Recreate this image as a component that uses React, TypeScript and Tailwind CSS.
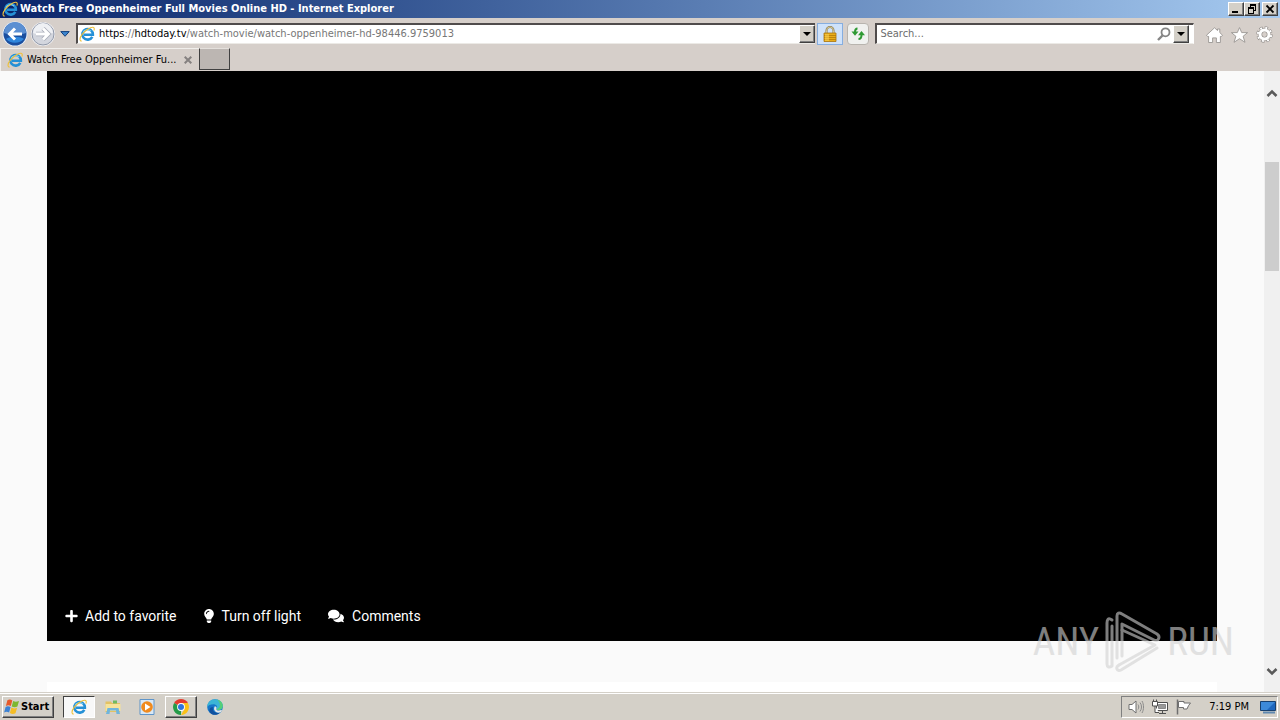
import type { ReactNode } from 'react';
import { FaComments, FaLightbulb, FaPlus } from 'react-icons/fa';

const PAGE_TITLE = 'Watch Free Oppenheimer Full Movies Online HD';

function IeLogo({ className }: { className: string }) {
  return (
    <svg viewBox="0 0 16 16" className={className} fill="none" aria-hidden="true">
      <path d="M13.300 10.800A5.300 5.300 0 1 1 13.900 8.700H5" stroke="#2590d6" strokeWidth="2.600" />
      <path d="M4 6.600A4.900 4.900 0 0 1 12 5.200" stroke="#7fd0f7" strokeWidth="1.200" />
      <path d="M2.800 15C.3 15.200.4 12 3.300 8.200 6.200 4.300 11.400 1 14 1.300c1.400.2 1.500 1.700.9 3.300" stroke="#efc03a" strokeWidth="1.100" />
    </svg>
  );
}

function WindowButton({ label, children, className = '' }: { label: string; children: ReactNode; className?: string }) {
  return (
    <button
      type="button"
      aria-label={label}
      className={`flex h-[14px] w-4 items-center justify-center border border-t-white border-r-[#404040] border-b-[#404040] border-l-white bg-[#d4d0c8] shadow-[inset_-1px_-1px_0_#808080] ${className}`}
    >
      <svg viewBox="0 0 14 12" className="h-3 w-[14px] shrink-0" fill="none" stroke="#000" shapeRendering="crispEdges" aria-hidden="true">
        {children}
      </svg>
    </button>
  );
}

function TitleBar() {
  return (
    <header className="flex h-[18px] shrink-0 items-center bg-linear-to-r from-[#0a246a] to-[#a6caf0] px-[2px]">
      <IeLogo className="mr-[2px] h-4 w-4" />
      <h1 className="flex-1 truncate text-[11px] leading-4 font-bold text-white">{PAGE_TITLE} - Internet Explorer</h1>
      <WindowButton label="Minimize">
        <path d="M3 9h6" strokeWidth="2" />
      </WindowButton>
      <WindowButton label="Restore">
        <path d="M5 2h6M3 5h6" strokeWidth="2" />
        <path d="M5.500 2v3M10.500 2v5.500H9M3.500 5v5.500h5V5" />
      </WindowButton>
      <WindowButton label="Close" className="ml-[2px]">
        <path d="M3.500 2.500l7 7M10.500 2.500l-7 7" strokeWidth="1.800" shapeRendering="auto" />
      </WindowButton>
    </header>
  );
}

function DropButton({ label }: { label: string }) {
  return (
    <button
      type="button"
      aria-label={label}
      className="flex h-[18px] w-4 shrink-0 items-center justify-center border border-t-white border-r-[#404040] border-b-[#404040] border-l-white bg-[#d4d0c8] shadow-[inset_-1px_-1px_0_#808080]"
    >
      <svg viewBox="0 0 8 4" className="h-1 w-2" aria-hidden="true">
        <path d="M0 0h8L4 4z" />
      </svg>
    </button>
  );
}

function NavBar() {
  return (
    <div className="flex h-[30px] shrink-0 items-center pt-px pl-[2px]">
      <button type="button" aria-label="Back">
        <svg viewBox="0 0 26 26" className="h-[26px] w-[26px]" aria-hidden="true">
          <circle cx="13" cy="13" r="12.500" fill="#e8eef7" />
          <circle cx="13" cy="13" r="11.500" fill="#1b4f9f" />
          <path d="M2 12a11 11 0 0 1 22 0c-6 2-16 2-22 0z" fill="#5b8fd2" />
          <path d="M4 18a11 9 0 0 0 18 0c-4-3-14-3-18 0z" fill="#2f86dc" />
          <path d="M20 13H8M13 7.500L7.500 13l5.500 5.500" fill="none" stroke="#fff" strokeWidth="3" />
        </svg>
      </button>
      <button type="button" aria-label="Forward" className="ml-[2px]">
        <svg viewBox="0 0 26 26" className="h-[26px] w-[26px]" aria-hidden="true">
          <circle cx="13" cy="13" r="12" fill="#f4f4f6" />
          <circle cx="13" cy="13" r="11" fill="#d3d6de" stroke="#8f97a8" />
          <path d="M3 12a10 10 0 0 1 20 0c-6 2-14 2-20 0z" fill="#eef0f4" />
          <path d="M6 13h12M13 7.500l5.500 5.500-5.500 5.500" fill="none" stroke="#a9adb8" strokeWidth="4.500" />
          <path d="M6 13h12M13 7.500l5.500 5.500-5.500 5.500" fill="none" stroke="#fff" strokeWidth="2.800" />
        </svg>
      </button>
      <button type="button" aria-label="Recent pages" className="ml-1">
        <svg viewBox="0 0 10 6" className="h-[6px] w-[10px]" aria-hidden="true">
          <path d="M.8.600h8.400L5 5.300z" fill="#3c86cf" stroke="#123f7c" />
        </svg>
      </button>
      <div className="ml-[6px] flex h-[21px] flex-[743] items-center border-t-2 border-b border-l-2 border-t-[#504c4c] border-b-[#eceae6] border-l-[#504c4c] bg-white">
        <IeLogo className="mx-px h-4 w-4" />
        <div className="relative ml-px min-w-0 flex-1">
          <input
            aria-label="Address"
            defaultValue="https://hdtoday.tv/watch-movie/watch-oppenheimer-hd-98446.9759013"
            className="block w-full bg-white pl-[2px] text-[11px] leading-4 text-transparent outline-none"
          />
          <span className="pointer-events-none absolute inset-0 truncate pl-[2px] text-[11px] leading-4 text-[#777]">
            <b className="font-normal text-black">https</b>://<b className="font-normal text-black">hdtoday.tv</b>
            /watch-movie/watch-oppenheimer-hd-98446.9759013
          </span>
        </div>
        <DropButton label="Show address history" />
      </div>
      <button
        type="button"
        aria-label="Security report"
        className="ml-[2px] flex h-[22px] w-[26px] shrink-0 items-center justify-center border border-[#86aee0] bg-[#cfe2fa]"
      >
        <svg viewBox="0 0 14 16" className="h-4 w-[14px]" aria-hidden="true">
          <path d="M3.500 8V4.500a3.500 3.500 0 0 1 7 0V8" fill="none" stroke="#8b7a4a" strokeWidth="2" />
          <path d="M3.500 8V4.500a3.500 3.500 0 0 1 7 0V8" fill="none" stroke="#e6d9a8" strokeWidth=".8" />
          <path d="M1 7h12v8.500H1z" fill="#e9ae1c" stroke="#a8730c" strokeWidth=".8" />
          <path d="M1 9.500h12M1 11.500h12M1 13.500h12" stroke="#b57a08" strokeWidth=".8" />
          <path d="M2 8h4v7H2z" fill="#ffd75a" opacity=".5" />
        </svg>
      </button>
      <button
        type="button"
        aria-label="Refresh"
        className="ml-1 flex h-[22px] w-[22px] shrink-0 items-center justify-center rounded-sm border border-[#b8b4ae] bg-[#f0f1ef]"
      >
        <svg viewBox="0 0 16 14" className="h-[14px] w-4" aria-hidden="true">
          <path d="M7.500 1.500C5.600 1.500 5 2.600 5 5M8.500 12c2.200 0 3-1.200 3-4" fill="none" stroke="#2e9a33" strokeWidth="2" />
          <path d="M1.500 4.500h7L5 8.800zM8 8.200h7L11.500 4z" fill="#2e9a33" />
        </svg>
      </button>
      <form
        role="search"
        className="ml-[6px] flex h-[21px] flex-[314] items-center border-t-2 border-r border-b border-l-2 border-t-[#504c4c] border-r-white border-b-[#eceae6] border-l-[#504c4c] bg-white pr-1"
      >
        <input
          aria-label="Search"
          placeholder="Search..."
          className="block min-w-0 flex-1 pl-[3px] text-[11px] leading-4 outline-none placeholder:text-[#6d6d6d]"
        />
        <button type="button" aria-label="Run search" className="mr-[2px]">
          <svg viewBox="0 0 14 14" className="h-[14px] w-[14px]" fill="none" stroke="#858585" aria-hidden="true">
            <circle cx="8.500" cy="5.300" r="4" strokeWidth="1.800" />
            <path d="M5.500 8.500L1 13" strokeWidth="2.400" />
          </svg>
        </button>
        <DropButton label="Search options" />
      </form>
      <div className="ml-3 flex shrink-0 items-center gap-2 pr-[7px] pt-[2px]">
        <button type="button" aria-label="Home">
          <svg viewBox="0 0 17 16" className="h-4 w-[17px]" fill="#fff" stroke="#9a9693" strokeWidth=".9" aria-hidden="true">
            <path d="M8.500.8l3 2.700V2h2.300v3.600L16.500 8.200 15 9.900l-.6-.5v6.100h-4v-4.600H6.600v4.600h-4V9.400l-.6.5L.5 8.200z" />
          </svg>
        </button>
        <button type="button" aria-label="Favorites">
          <svg viewBox="0 0 17 16" className="h-4 w-[17px]" fill="#fff" stroke="#9a9693" strokeWidth=".9" aria-hidden="true">
            <path d="M8.500.6l2.200 5h5.900l-4.500 3.700 1.900 6-5.500-3.600-5.500 3.600 1.900-6L.4 5.600h5.900z" />
          </svg>
        </button>
        <button type="button" aria-label="Tools">
          <svg viewBox="0 0 17 17" className="h-[17px] w-[17px]" fill="none" aria-hidden="true">
            <circle cx="8.500" cy="8.500" r="6.700" stroke="#8f8b88" strokeWidth="3" strokeDasharray="3.200 2.062" />
            <circle cx="8.500" cy="8.500" r="4.400" stroke="#8f8b88" strokeWidth="4" />
            <circle cx="8.500" cy="8.500" r="6.700" stroke="#fff" strokeWidth="2" strokeDasharray="2 3.262" strokeDashoffset="-.6" />
            <circle cx="8.500" cy="8.500" r="4.500" stroke="#fff" strokeWidth="3" />
          </svg>
        </button>
      </div>
    </div>
  );
}

function TabBar() {
  return (
    <div className="flex h-[23px] shrink-0">
      <div className="flex w-[199px] items-center border-t border-l border-[#f1efec] pl-[6px]">
        <IeLogo className="h-4 w-4" />
        <span className="ml-1 text-[11px] leading-4 whitespace-nowrap">Watch Free Oppenheimer Fu...</span>
        <button type="button" aria-label="Close tab" className="ml-auto mr-[7px]">
          <svg viewBox="0 0 8 8" className="h-2 w-2" stroke="#858180" strokeWidth="2" aria-hidden="true">
            <path d="M.7.700l6.600 6.600M7.300.700L.7 7.300" />
          </svg>
        </button>
      </div>
      <button
        type="button"
        aria-label="New tab"
        className="h-[22px] w-[31px] border border-t-[#e4e0dc] border-r-[#404040] border-b-[#404040] border-l-[#404040] bg-[#bcb6b2]"
      />
    </div>
  );
}

function PlayerActions() {
  return (
    <div className="flex items-center pb-[15px] pl-[18px] font-[Roboto,sans-serif] text-[14px] leading-5 text-white">
      <button type="button" className="flex items-center gap-[7px]">
        <FaPlus className="h-[14px] w-[13px]" />
        Add to favorite
      </button>
      <button type="button" className="ml-[26px] flex items-center gap-[7px]">
        <FaLightbulb className="h-[14px] w-3" />
        Turn off light
      </button>
      <button type="button" className="ml-[27px] flex items-center gap-2">
        <FaComments className="h-4 w-4" />
        Comments
      </button>
    </div>
  );
}

function Scrollbar() {
  return (
    <div className="flex w-4 shrink-0 flex-col items-center bg-[#f0f0f0] pt-[18px] pb-4" role="presentation">
      <svg viewBox="0 0 12 8" className="h-2 w-3 shrink-0" fill="none" stroke="#5a5a5a" strokeWidth="2.600" aria-hidden="true">
        <path d="M1.500 7L6 2.500 10.500 7" />
      </svg>
      <div className="flex w-full flex-1 flex-col px-px">
        <div className="flex-[65]" />
        <div className="flex-[109] bg-[#cdcdcd]" />
        <div className="flex-[397]" />
      </div>
      <svg viewBox="0 0 12 8" className="h-2 w-3 shrink-0" fill="none" stroke="#5a5a5a" strokeWidth="2.600" aria-hidden="true">
        <path d="M1.500 1L6 5.500 10.500 1" />
      </svg>
    </div>
  );
}

function Watermark() {
  return (
    <div className="pointer-events-none absolute right-[46px] bottom-11 flex items-center gap-1 font-['Roboto_Condensed','Liberation_Sans_Narrow','Liberation_Sans',sans-serif] text-[39px] leading-[68px] text-[#d2d2d2] opacity-60">
      <span>ANY</span>
      <svg viewBox="0 0 60 68" className="h-[68px] w-[60px]" fill="none" stroke="currentColor" strokeWidth="3" strokeLinejoin="round" strokeLinecap="round" aria-hidden="true">
        <path d="M9 12C5 9 4 12 4 15v41c0 3 2 4 5 2V18" />
        <path d="M14 50V8c0-3 2-4 5-2l35 20c4 3 1 8-3 6L19 16v32" />
        <path d="M19 22l33 15L16 57" />
        <path d="M54 40L18 62c-4 2-6-3-2-5" />
      </svg>
      <span>RUN</span>
    </div>
  );
}

function TaskButton({ label, children, className = '' }: { label: string; children: ReactNode; className?: string }) {
  return (
    <button type="button" aria-label={label} className={`flex h-[22px] w-8 items-center justify-center border ${className}`}>
      {children}
    </button>
  );
}

function Taskbar() {
  return (
    <footer className="flex h-7 shrink-0 items-center border-t border-[#d4d0c8] bg-[#d4d0c8] pr-[2px] pl-[2px] shadow-[inset_0_1px_0_#fff]">
      <button
        type="button"
        className="flex h-[22px] w-[52px] items-center gap-px border border-t-white border-r-[#404040] border-b-[#404040] border-l-white pl-px text-[11px] leading-4 font-bold shadow-[inset_-1px_-1px_0_#808080]"
      >
        <svg viewBox="0 0 16 16" className="h-4 w-4 shrink-0" aria-hidden="true">
          <path d="M3.400 1.300C5.200.2 6.800.5 8.300 1.500L6.800 7C5.200 5.900 3.600 5.900 1.900 6.900z" fill="#e65a2a" />
          <path d="M9.200 2c1.800 1.100 3.600 1 5.800 0l-1.600 5.600c-2 1-3.900.8-5.700-.1z" fill="#7db72f" />
          <path d="M1.600 7.900c1.700-1 3.300-.9 5 .2L5.100 13.600c-1.600-1.100-3.300-1.200-5-.2z" fill="#3c82d4" />
          <path d="M7.400 8.600c1.800 1.100 3.600 1 5.700.1l-1.600 5.500c-2 1-3.700.9-5.600-.2z" fill="#f5bd25" />
        </svg>
        Start
      </button>
      <nav aria-label="Task buttons" className="ml-[9px] flex items-center gap-[2px]">
        <TaskButton label="Internet Explorer" className="border-t-[#404040] border-r-white border-b-white border-l-[#404040] bg-[#f8f8f8]">
          <IeLogo className="h-4 w-4" />
        </TaskButton>
        <TaskButton label="Windows Explorer" className="border-transparent">
          <svg viewBox="0 0 16 16" className="h-4 w-4" aria-hidden="true">
            <path d="M.5 2.500H6L7 4h8v9H.5z" fill="#e3c264" />
            <path d="M8 1.500h4v3H8z" fill="#6fba62" />
            <path d="M.5 5h15v7H.5z" fill="#f6e39b" />
            <path d="M2.500 9h11l1.500 6h-3.500l-.5-3.500H5L4.500 15H1z" fill="#70b5dc" />
          </svg>
        </TaskButton>
        <TaskButton label="Media Player" className="border-transparent">
          <svg viewBox="0 0 16 16" className="h-4 w-4" aria-hidden="true">
            <path d="M1 .500h14v15H1z" fill="#d9e8f5" stroke="#5f95c9" />
            <circle cx="8" cy="8" r="5.800" fill="#f08a1d" />
            <path d="M6 4.500v7L11.500 8z" fill="#fff" />
          </svg>
        </TaskButton>
        <TaskButton label="Chrome" className="border-t-white border-r-[#404040] border-b-[#404040] border-l-white shadow-[inset_-1px_-1px_0_#808080]">
          <svg viewBox="0 0 16 16" className="h-4 w-4" aria-hidden="true">
            <path d="M8 8L1.100 4A8 8 0 0 1 14.900 4z" fill="#e33b2e" />
            <path d="M8 8v8A8 8 0 0 1 1.100 4z" fill="#259b48" />
            <path d="M8 4h6.900A8 8 0 0 1 8 16l3.500-6z" fill="#fbc116" />
            <circle cx="8" cy="8" r="3.900" fill="#fff" />
            <circle cx="8" cy="8" r="3" fill="#2f74de" />
          </svg>
        </TaskButton>
        <TaskButton label="Edge" className="border-transparent">
          <svg viewBox="0 0 16 16" className="h-4 w-4" aria-hidden="true">
            <circle cx="8" cy="8" r="7.800" fill="#1576c9" />
            <path d="M.2 8C.3 3.500 3.700.200 8 .200c4.600 0 7.800 3.200 7.800 6.500 0 2.800-2.200 4.300-4.500 4.300-1.500 0-2.300-.6-1.700-1.500 1.300-2-.4-4.200-3.200-4.200C3.400 5.300.9 6.700.2 8z" fill="#3bb5d6" />
            <path d="M10 .500c3.500.8 5.800 3.500 5.800 6.200 0 2.800-2.200 4.300-4.500 4.300-1 0-1.700-.3-1.800-.8C14 9 14 4 10 .500z" fill="#55cf78" />
            <path d="M6 8c-1 4 2 7 7 5.500C10 17 4 16.500 2.500 12.500 1.800 9.500 4 8 6 8z" fill="#0f509f" />
            <path d="M7.500 7.600c1.200-.5 2.300.2 2 1.600-.7 1.600.6 2.400 2.500 2.300l3.200-.8-1.500 2.500C11 14.500 7.500 13 7 10z" fill="#e4e6e6" />
          </svg>
        </TaskButton>
      </nav>
      <div className="ml-auto flex h-[22px] items-center border border-t-[#808080] border-r-white border-b-white border-l-[#808080] pr-px pl-[6px]">
        <svg viewBox="0 0 16 16" className="h-4 w-4" fill="#fff" stroke="#6f6f6f" aria-hidden="true">
          <path d="M1 5.500h3L8 2v12l-4-3.500H1z" />
          <path d="M10 5.500c1 1.500 1 3.500 0 5M12 3.500c2 2.600 2 6.400 0 9M14 2c2 3.500 2 8.500 0 12" fill="none" stroke="#8a8a8a" />
        </svg>
        <svg viewBox="0 0 16 16" className="ml-2 h-4 w-4" fill="#fff" stroke="#4f4f4f" aria-hidden="true">
          <path d="M4.500 3.500h11v8h-11z" fill="#fff" />
          <path d="M6.500 5.500h7v4h-7z" fill="#999" stroke="#888" />
          <path d="M7 14.500h7M10.500 12v2" />
          <path d="M.500 2.500h5V7h-5zM3 7v6.500h4M1.500.500v2M4.500.500v2" />
        </svg>
        <svg viewBox="0 0 16 16" className="ml-2 h-4 w-4" fill="#fff" stroke="#6f6f6f" aria-hidden="true">
          <path d="M1.500.500V15.500" strokeWidth="1.500" />
          <path d="M2.500 2.500h5.500V4h6.500l-2 2.700L11 10H7.500V8.500h-5z" />
        </svg>
        <time className="ml-[17px] text-[11px] leading-4 whitespace-nowrap">7:19 PM</time>
        <svg viewBox="0 0 16 14" className="ml-[11px] h-[14px] w-4" aria-hidden="true">
          <path d="M.500 1.500h15v9H.500z" fill="#1f67bd" stroke="#17406f" />
          <path d="M1 2h14L7 10H1z" fill="#3d8ad9" />
          <path d="M3 12.500h12" stroke="#5f88b0" strokeWidth="2" />
        </svg>
      </div>
    </footer>
  );
}

export default function App() {
  return (
    <div className="relative flex h-screen flex-col overflow-hidden bg-[#d6cfca] font-['DejaVu_Sans_Condensed','Noto_Sans',sans-serif] text-black">
      <TitleBar />
      <NavBar />
      <TabBar />
      <div className="flex min-h-0 flex-1 bg-[#fafafa]">
        <main className="flex min-w-0 flex-1 flex-col px-[47px]">
          <section aria-label="Player" className="flex flex-1 flex-col justify-end bg-black">
            <PlayerActions />
          </section>
          <div className="mt-[41px] h-[10px] bg-white" />
        </main>
        <Scrollbar />
      </div>
      <Taskbar />
      <Watermark />
    </div>
  );
}
